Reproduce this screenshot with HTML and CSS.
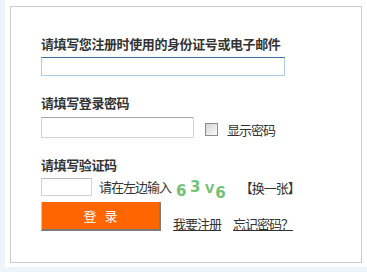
FILE: index.html
```html
<!DOCTYPE html>
<html lang="zh-CN">
<head>
<meta charset="utf-8">
<title>登录</title>
<link rel="stylesheet" href="styles.css">
</head>
<body>
<div class="page">
  <form class="box">
    <div class="label">请填写您注册时使用的身份证号或电子邮件</div>
    <input class="field field-account" type="text">
    <div class="label label-gap">请填写登录密码</div>
    <div class="row row-pwd">
      <input class="field field-pwd" type="password">
      <input class="check" type="checkbox" id="show">
      <label class="check-label" for="show">显示密码</label>
    </div>
    <div class="label label-gap">请填写验证码</div>
    <div class="row row-code">
      <input class="field field-code" type="text">
      <span class="hint">请在左边输入</span>
      <span class="captcha"><span class="d d1">6</span><span class="d d2">3</span><span class="d d3">V</span><span class="d d4">6</span></span>
      <a class="refresh">【换一张】</a>
    </div>
    <div class="row row-submit">
      <button class="btn" type="button">登录</button>
      <a class="link" href="#">我要注册</a>
      <a class="link" href="#">忘记密码？</a>
    </div>
  </form>
</div>
</body>
</html>
```

FILE: styles.css
```css
html, body {
  margin: 0;
  padding: 0;
}
body {
  background: #eef4fc;
  font: 13px/14px "Noto Sans CJK SC", sans-serif;
  letter-spacing: -1px;
  color: #333;
}
.page {
  margin-left: 5px;
  width: 362px;
  height: 267px;
  background: #fff;
  padding: 6px 0 0 5px;
  box-sizing: border-box;
}
.box {
  margin: 0;
  width: 352px;
  height: 257px;
  border: 1px solid #cbcbcb;
  box-sizing: border-box;
  padding: 30px 0 0 30px;
}
.label {
  font-weight: bold;
  line-height: 14px;
  letter-spacing: -0.4px;
  color: #333;
}
.label-gap {
  margin-top: 20px;
}
.field {
  display: block;
  margin: 0;
  padding: 0 2px;
  box-sizing: border-box;
  background: #fff;
  font: inherit;
  outline: none;
}
.field-account {
  margin-top: 6px;
  width: 244px;
  height: 19px;
  border: 1px solid #a9cce8;
  border-top-color: #3e6e9c;
}
.row {
  display: flex;
  align-items: flex-start;
}
.row-pwd {
  margin-top: 7px;
}
.field-pwd {
  width: 153px;
  height: 21px;
  border: 1px solid #d2d6da;
  border-top-color: #a8a8a8;
}
.check {
  appearance: none;
  -webkit-appearance: none;
  margin: 6px 0 0 11px;
  width: 13px;
  height: 13px;
  border: 1px solid #8d8d8d;
  box-sizing: border-box;
  background: linear-gradient(135deg, #d4d4d4, #fafafa);
}
.check-label {
  margin: 6px 0 0 9px;
  line-height: 14px;
}
.row-code {
  margin-top: 6px;
  height: 18px;
}
.field-code {
  width: 51px;
  height: 18px;
  border: 1px solid #cfd4d9;
  border-top-color: #b9bdc2;
}
.hint {
  margin-left: 7px;
  line-height: 18px;
}
.captcha {
  display: flex;
  align-items: flex-start;
  margin-left: 5px;
  color: #74c076;
  font-family: "DejaVu Sans", sans-serif;
  font-weight: bold;
  font-size: 15px;
  line-height: 15px;
  letter-spacing: 0;
}
.d1 { margin-top: 6px; }
.d2 { margin-top: 2px; margin-left: 3.5px; }
.d3 { margin-top: 4px; margin-left: 4.5px; font-size: 12px; line-height: 14px; }
.d4 { margin-top: 8px; margin-left: 1px; }
.refresh {
  margin-left: 14px;
  margin-top: 3px;
  line-height: 14px;
  color: #333;
  cursor: pointer;
}
.row-submit {
  margin-top: 6px;
  align-items: flex-end;
}
.btn {
  appearance: none;
  -webkit-appearance: none;
  margin: 0;
  padding: 0;
  width: 120px;
  height: 29px;
  box-sizing: border-box;
  background: #ff6600;
  border-style: solid;
  border-width: 0 2px 2px 1px;
  border-color: #ff6600 #7c7c7c #7c7c7c #c8c8c8;
  color: #fff;
  font: 13px/27px "Noto Sans CJK SC", sans-serif;
  letter-spacing: 8px;
  text-indent: 8px;
  text-align: center;
}
.link {
  margin-left: 12px;
  color: #333;
  text-decoration: underline;
  line-height: 14px;
}
```
